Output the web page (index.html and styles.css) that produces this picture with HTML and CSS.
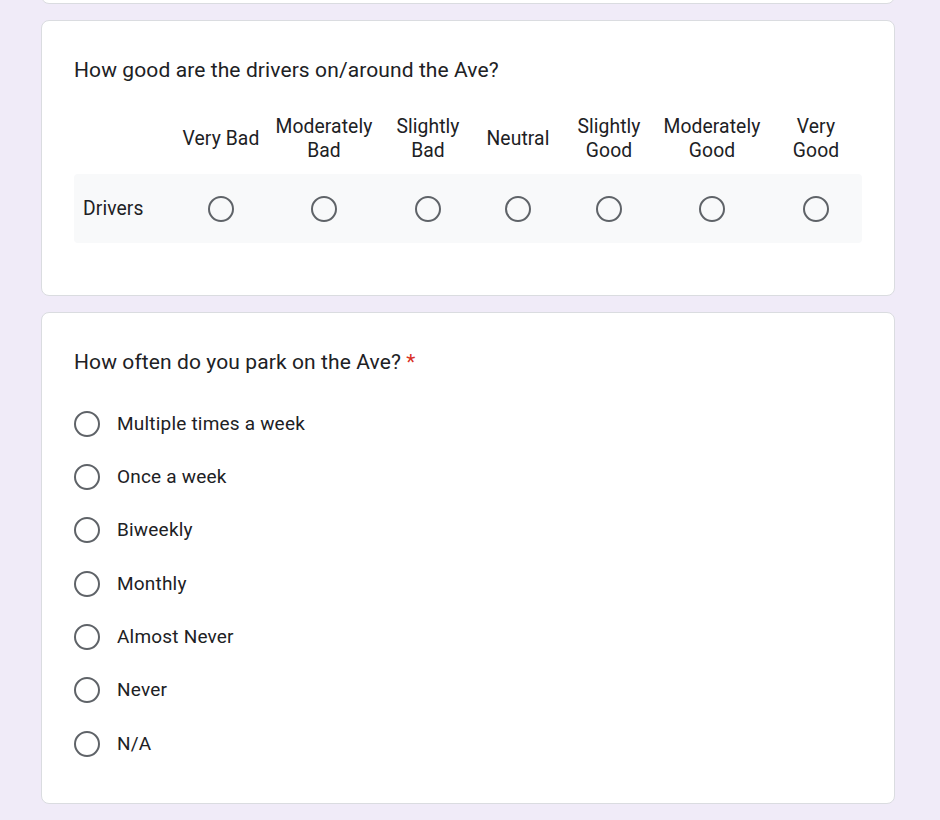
FILE: index.html
```html
<!DOCTYPE html>
<html lang="en">
<head>
<meta charset="utf-8">
<title>Form</title>
<link rel="stylesheet" href="styles.css">
</head>
<body>
<div class="page">
  <div class="card card-prev"></div>

  <div class="card card-grid">
    <div class="q-title">How good are the drivers on/around the Ave?</div>
    <div class="grid grid-head">
      <div></div>
      <div class="col-label">Very Bad</div>
      <div class="col-label">Moderately<br>Bad</div>
      <div class="col-label">Slightly<br>Bad</div>
      <div class="col-label">Neutral</div>
      <div class="col-label">Slightly<br>Good</div>
      <div class="col-label">Moderately<br>Good</div>
      <div class="col-label">Very<br>Good</div>
    </div>
    <div class="grid grid-row">
      <div class="row-label">Drivers</div>
      <div class="cell"><span class="radio"></span></div>
      <div class="cell"><span class="radio"></span></div>
      <div class="cell"><span class="radio"></span></div>
      <div class="cell"><span class="radio"></span></div>
      <div class="cell"><span class="radio"></span></div>
      <div class="cell"><span class="radio"></span></div>
      <div class="cell"><span class="radio"></span></div>
    </div>
  </div>

  <div class="card card-choice">
    <div class="q-title">How often do you park on the Ave? <span class="req">*</span></div>
    <div class="options">
      <div class="option"><span class="radio"></span><span class="opt-text">Multiple times a week</span></div>
      <div class="option"><span class="radio"></span><span class="opt-text">Once a week</span></div>
      <div class="option"><span class="radio"></span><span class="opt-text">Biweekly</span></div>
      <div class="option"><span class="radio"></span><span class="opt-text">Monthly</span></div>
      <div class="option"><span class="radio"></span><span class="opt-text">Almost Never</span></div>
      <div class="option"><span class="radio"></span><span class="opt-text">Never</span></div>
      <div class="option"><span class="radio"></span><span class="opt-text">N/A</span></div>
    </div>
  </div>
</div>
</body>
</html>
```

FILE: styles.css
```css
html, body {
  margin: 0;
  padding: 0;
  background: #f0ebf8;
}

body {
  font-family: Roboto, "Liberation Sans", Arial, sans-serif;
  color: #202124;
  height: 820px;
  overflow: hidden;
}

.page {
  width: 854px;
  margin-left: 41px;
  display: flex;
  flex-direction: column;
  gap: 16px;
}

.card {
  background: #fff;
  border: 1px solid #dadce0;
  border-radius: 8px;
  box-sizing: border-box;
  padding: 35px 32px 0 32px;
}

.card-prev {
  height: 100px;
  margin-top: -96px;
  padding: 0;
}

.card-grid {
  padding-bottom: 52px;
}

.card-choice {
  padding-bottom: 33px;
}

.q-title {
  font-size: 21px;
  line-height: 28px;
  letter-spacing: 0.1px;
}

.req {
  color: #d93025;
}

.grid {
  display: grid;
  grid-template-columns: 104px 86px 120px 88px 92px 90px 116px 92px;
  align-items: center;
}

.grid-head {
  margin-top: 20px;
  height: 70px;
}

.col-label {
  text-align: center;
  font-size: 19.3px;
  line-height: 24px;
  white-space: nowrap;
  letter-spacing: 0.1px;
}

.grid-row {
  height: 69px;
  background: #f8f9fa;
  border-radius: 4px;
}

.row-label {
  padding-left: 9px;
  font-size: 19.3px;
  line-height: 24px;
  letter-spacing: 0.1px;
}

.cell {
  display: flex;
  justify-content: center;
  align-items: center;
}

.radio {
  display: block;
  width: 26px;
  height: 26px;
  box-sizing: border-box;
  border: 2.5px solid #5f6368;
  border-radius: 50%;
  flex: none;
}

.options {
  margin-top: 21px;
  display: flex;
  flex-direction: column;
}

.option {
  height: 53.33px;
  display: flex;
  align-items: center;
  gap: 17px;
}

.opt-text {
  font-size: 19px;
  line-height: 24px;
  letter-spacing: 0.2px;
}
```
